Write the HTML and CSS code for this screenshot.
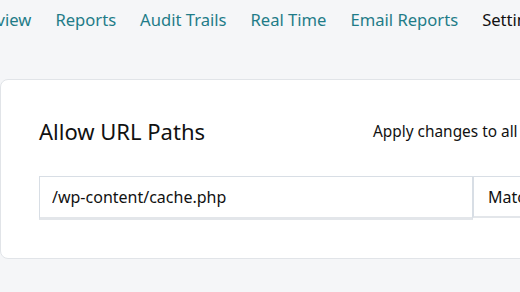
FILE: index.html
```html
<!DOCTYPE html>
<html lang="en">
<head>
    <meta charset="UTF-8">
    <meta name="viewport" content="width=device-width, initial-scale=1.0">
    <title>Settings</title>
    <link rel="stylesheet" href="styles.css">
</head>
<body>
    <nav class="tabs">
        <a href="#">Overview</a>
        <a href="#">Reports</a>
        <a href="#">Audit Trails</a>
        <a href="#">Real Time</a>
        <a href="#">Email Reports</a>
        <a href="#" class="active">Settings</a>
    </nav>

    <div class="card">
        <div class="card-head">
            <h2>Allow URL Paths</h2>
            <span class="apply">Apply changes to all</span>
        </div>
        <div class="path-row">
            <input type="text" class="path-input" value="/wp-content/cache.php">
            <div class="match">Match exactly</div>
        </div>
    </div>
</body>
</html>
```

FILE: styles.css
```css
body {
    margin: 0;
    background-color: #f5f6f8;
    font-family: 'Noto Sans', sans-serif;
    color: #111;
    overflow: hidden;
}

.tabs {
    display: flex;
    gap: 24px;
    height: 38px;
    align-items: center;
    margin-left: -41px;
    white-space: nowrap;
}

.tabs a {
    color: #1f7c88;
    text-decoration: none;
    font-size: 16.6px;
}

.tabs a.active {
    color: #111;
}

.card {
    width: 700px;
    margin-top: 41px;
    background-color: #fff;
    border: 1px solid #e1e4e8;
    border-radius: 8px;
    padding: 37px 38px 38px 38px;
}

.card-head {
    display: grid;
    grid-template-columns: 334px 1fr;
    align-items: center;
}

.card-head h2 {
    margin: 0;
    font-size: 22px;
    font-weight: 400;
    line-height: 28px;
}

.apply {
    font-size: 15.4px;
    white-space: nowrap;
}

.path-row {
    display: flex;
    margin-top: 31px;
}

.path-input {
    width: 434px;
    height: 44px;
    box-sizing: border-box;
    border: 1px solid #d8dee5;
    border-bottom: 3px solid #e3e6ea;
    border-radius: 0;
    padding: 0 12px;
    font-family: inherit;
    font-size: 16px;
    color: #111;
    outline: none;
}

.match {
    height: 42px;
    box-sizing: border-box;
    border: 1px solid #d8dee5;
    border-bottom: 2px solid #e3e6ea;
    padding: 0 14px;
    display: flex;
    align-items: center;
    font-size: 16px;
    white-space: nowrap;
    flex: 1;
}
```
